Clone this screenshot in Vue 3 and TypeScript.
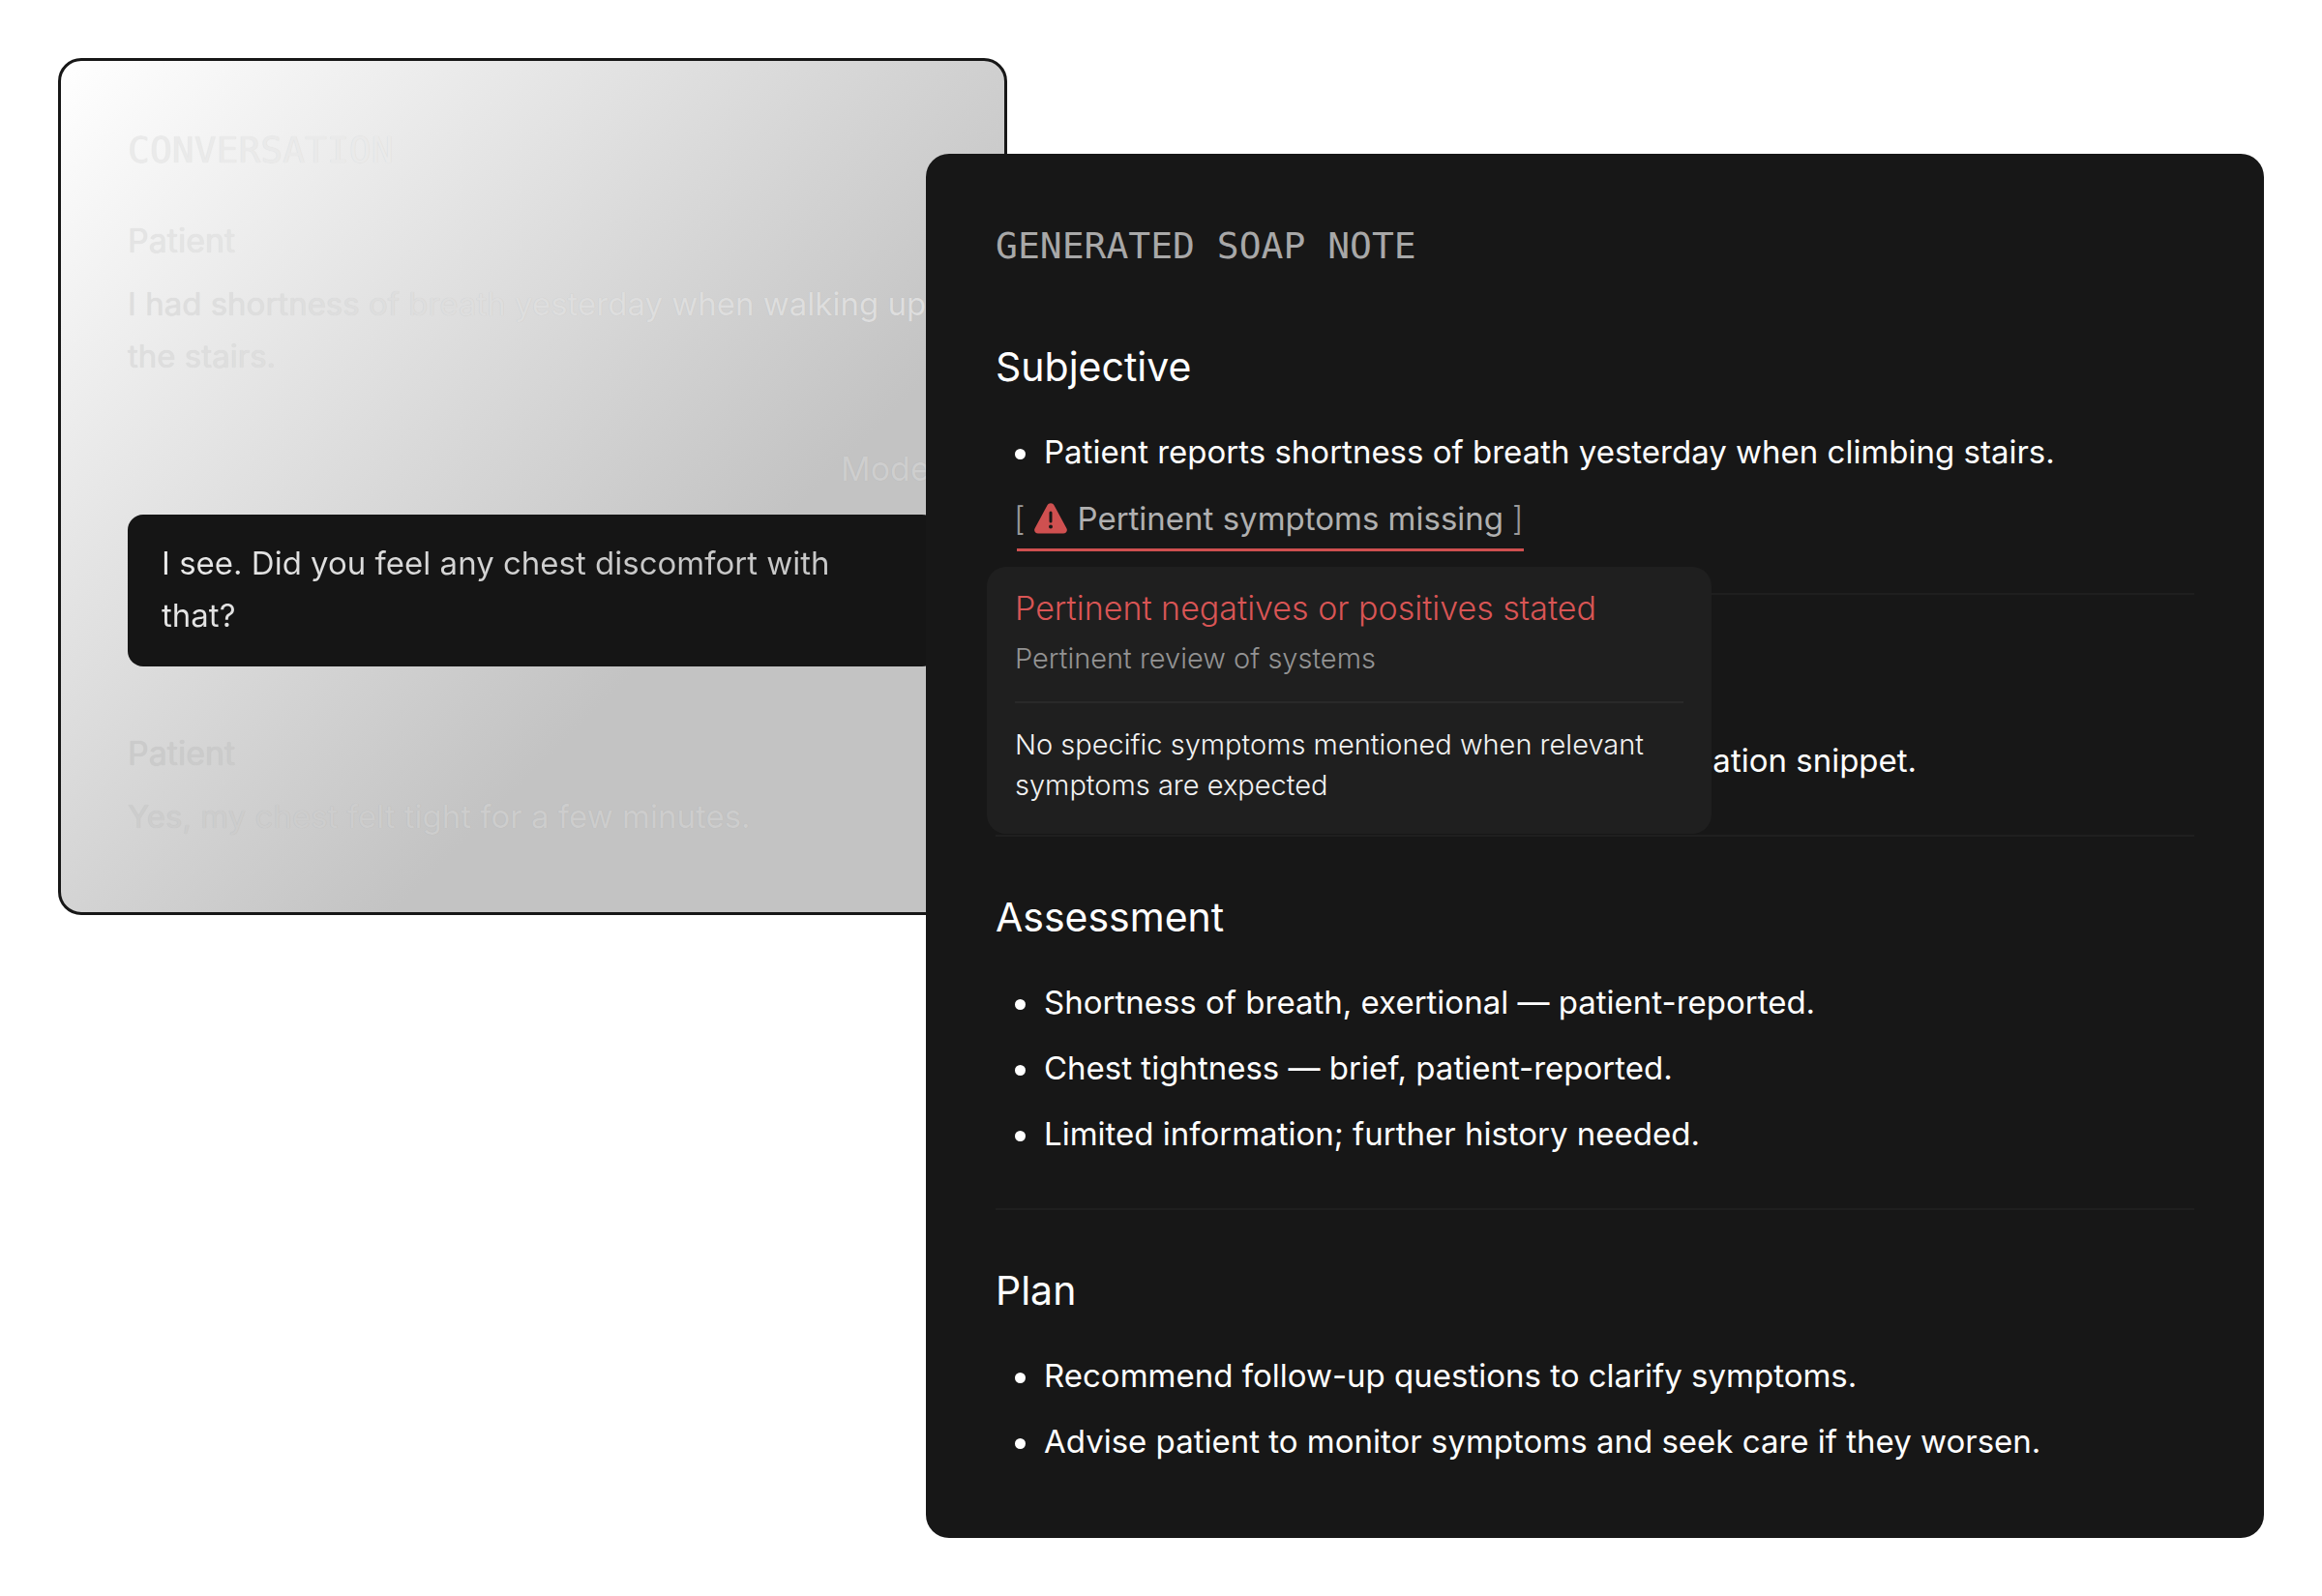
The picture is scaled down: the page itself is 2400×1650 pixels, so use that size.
<script setup lang="ts">
interface Turn {
  id: string
  speaker: 'Patient' | 'Model'
  text: string
}

interface NoteSection {
  title: string
  items: string[]
  flagged?: boolean
}

const turns: Turn[] = [
  { id: 'onset', speaker: 'Patient', text: 'I had shortness of breath yesterday when walking up the stairs.' },
  { id: 'question', speaker: 'Model', text: 'I see. Did you feel any chest discomfort with that?' },
  { id: 'answer', speaker: 'Patient', text: 'Yes, my chest felt tight for a few minutes.' },
]

const sections: NoteSection[] = [
  {
    title: 'Subjective',
    items: ['Patient reports shortness of breath yesterday when climbing stairs.'],
    flagged: true,
  },
  { title: 'Objective', items: ['No physical exam findings from this conversation snippet.'] },
  {
    title: 'Assessment',
    items: [
      'Shortness of breath, exertional — patient-reported.',
      'Chest tightness — brief, patient-reported.',
      'Limited information; further history needed.',
    ],
  },
  {
    title: 'Plan',
    items: [
      'Recommend follow-up questions to clarify symptoms.',
      'Advise patient to monitor symptoms and seek care if they worsen.',
    ],
  },
]
</script>

<template>
  <main class="stage">
    <section class="conversation">
      <h2 class="eyebrow">CONVERSATION</h2>
      <article v-for="turn in turns" :key="turn.id" class="turn" :class="[turn.speaker.toLowerCase(), turn.id]">
        <h3 class="speaker">{{ turn.speaker }}</h3>
        <p class="speech"><span>{{ turn.text }}</span></p>
      </article>
    </section>

    <section class="note">
      <h2 class="eyebrow">GENERATED SOAP NOTE</h2>
      <section v-for="section in sections" :key="section.title" class="note-section">
        <h3 class="title">{{ section.title }}</h3>
        <ul class="items">
          <li v-for="item in section.items" :key="item" class="item">{{ item }}</li>
          <li v-if="section.flagged" class="flag">
            <button type="button" class="flag-button" aria-describedby="flag-detail">
              <span class="bracket open">[</span>
              <svg class="warning" viewBox="0 0 34 32" aria-hidden="true">
                <path
                  fill="#cf5050"
                  d="M13.4 2.4C14.9-.4 19.1-.4 20.6 2.4L33.4 26.2C34.8 28.9 33 31.5 30 31.5H4C1 31.5-.8 28.9.6 26.2Z"
                />
                <path stroke="#171717" stroke-width="3" stroke-linecap="round" d="M17 10v9" />
                <circle cx="17" cy="24.5" r="2" fill="#171717" />
              </svg>
              <span>Pertinent symptoms missing</span>
              <span class="bracket close">]</span>
            </button>
            <aside id="flag-detail" class="tooltip" role="tooltip">
              <h4 class="tooltip-title">Pertinent negatives or positives stated</h4>
              <p class="tooltip-category">Pertinent review of systems</p>
              <p class="tooltip-body">No specific symptoms mentioned when relevant symptoms are expected</p>
            </aside>
          </li>
        </ul>
      </section>
    </section>
  </main>
</template>

<style>
body {
  margin: 0;
  background: #ffffff;
}
</style>

<style scoped>
.stage {
  display: grid;
  grid-template-columns: minmax(0, 897fr) minmax(0, 84fr) minmax(0, 1299fr);
  align-items: start;
  padding: 60px;
  font-family: Inter, sans-serif;
  font-size: 33px;
  font-weight: 400;
}

h2,
h3,
h4,
p,
ul {
  margin: 0;
  padding: 0;
  font-weight: inherit;
}

.eyebrow {
  font-family: 'DejaVu Sans Mono', monospace;
  font-size: 38px;
  line-height: 46px;
}

/* Conversation card, partly covered by the note */
.conversation {
  grid-area: 1 / 1 / 2 / 3;
  display: flex;
  flex-direction: column;
  padding: 69px 69px 72px;
  border: 3px solid #171717;
  border-radius: 24px;
  background: linear-gradient(135deg, #ffffff 0%, #c3c3c3 66%);
  text-shadow: 0 0 1px rgba(0, 0, 0, 0.09);
}

.conversation .eyebrow {
  margin-bottom: 49px;
  color: #eaeaea;
}

.turn + .turn {
  margin-top: 68px;
}

.speaker {
  margin-bottom: 16px;
  font-size: 34px;
  line-height: 44px;
}

.speech {
  line-height: 54px;
}

.onset .speaker {
  color: #e4e4e4;
}

.onset .speech {
  color: #dedede;
}

.answer .speaker {
  color: #cbcbcb;
}

.answer .speech {
  color: #cdcdcd;
}

.model .speaker {
  margin-bottom: 25px;
  text-align: right;
  color: #cecece;
}

.model .speech {
  padding: 23px 35px 26px;
  border-radius: 16px;
  background: #151515;
  text-shadow: none;
}

.model .speech span {
  display: block;
  color: transparent;
  background: linear-gradient(135deg, #ebebeb 0%, #c8c8c8 60%);
  background-clip: text;
}

/* Generated note */
.note {
  grid-area: 1 / 2 / 2 / 4;
  margin-top: 99px;
  padding: 72px 72px 74px;
  border-radius: 24px;
  background: #171717;
  color: #ffffff;
}

.note .eyebrow {
  margin-bottom: 76px;
  color: #a8a8a8;
}

.note-section + .note-section {
  margin-top: 51px;
  padding-top: 57px;
  border-top: 2px solid #1f1f1f;
}

.title {
  margin-bottom: 36px;
  font-size: 41px;
  line-height: 52px;
}

.items {
  display: flex;
  flex-direction: column;
  gap: 16px;
  padding-left: 20px;
  list-style: none;
}

.item {
  display: flex;
  align-items: center;
  gap: 19px;
  line-height: 52px;
}

.item::before {
  content: '';
  flex: none;
  width: 11px;
  height: 11px;
  margin-top: 4px;
  border-radius: 50%;
  background: #ffffff;
}

.flag {
  position: relative;
  display: flex;
  margin: -2px 0 -8px;
  padding-left: 2px;
}

.flag-button {
  display: flex;
  align-items: center;
  padding: 3px 0 5px;
  border: 0;
  border-bottom: 3px solid #cf5050;
  background: none;
  color: #b0b0b0;
  font: inherit;
  line-height: 52px;
  cursor: pointer;
}

.bracket {
  color: #9a9a9a;
  font-weight: 300;
}

.open {
  margin-left: -3px;
}

.close {
  margin-left: 9px;
}

.warning {
  width: 34px;
  height: 32px;
  margin: 0 11px 0 9px;
}

.tooltip {
  position: absolute;
  top: calc(100% + 16px);
  left: -29px;
  z-index: 1;
  box-sizing: border-box;
  width: 749px;
  padding: 21px 29px 29px;
  border-radius: 20px;
  background: #1f1f1f;
}

.tooltip-title {
  font-size: 34px;
  font-weight: 300;
  line-height: 44px;
  color: #d95555;
}

.tooltip-category {
  margin-top: 10px;
  font-size: 29px;
  font-weight: 300;
  line-height: 40px;
  color: #939393;
}

.tooltip-body {
  margin-top: 24px;
  padding-top: 22px;
  border-top: 2px solid #292929;
  font-size: 29px;
  font-weight: 300;
  line-height: 42px;
  color: #f2f2f2;
}
</style>
